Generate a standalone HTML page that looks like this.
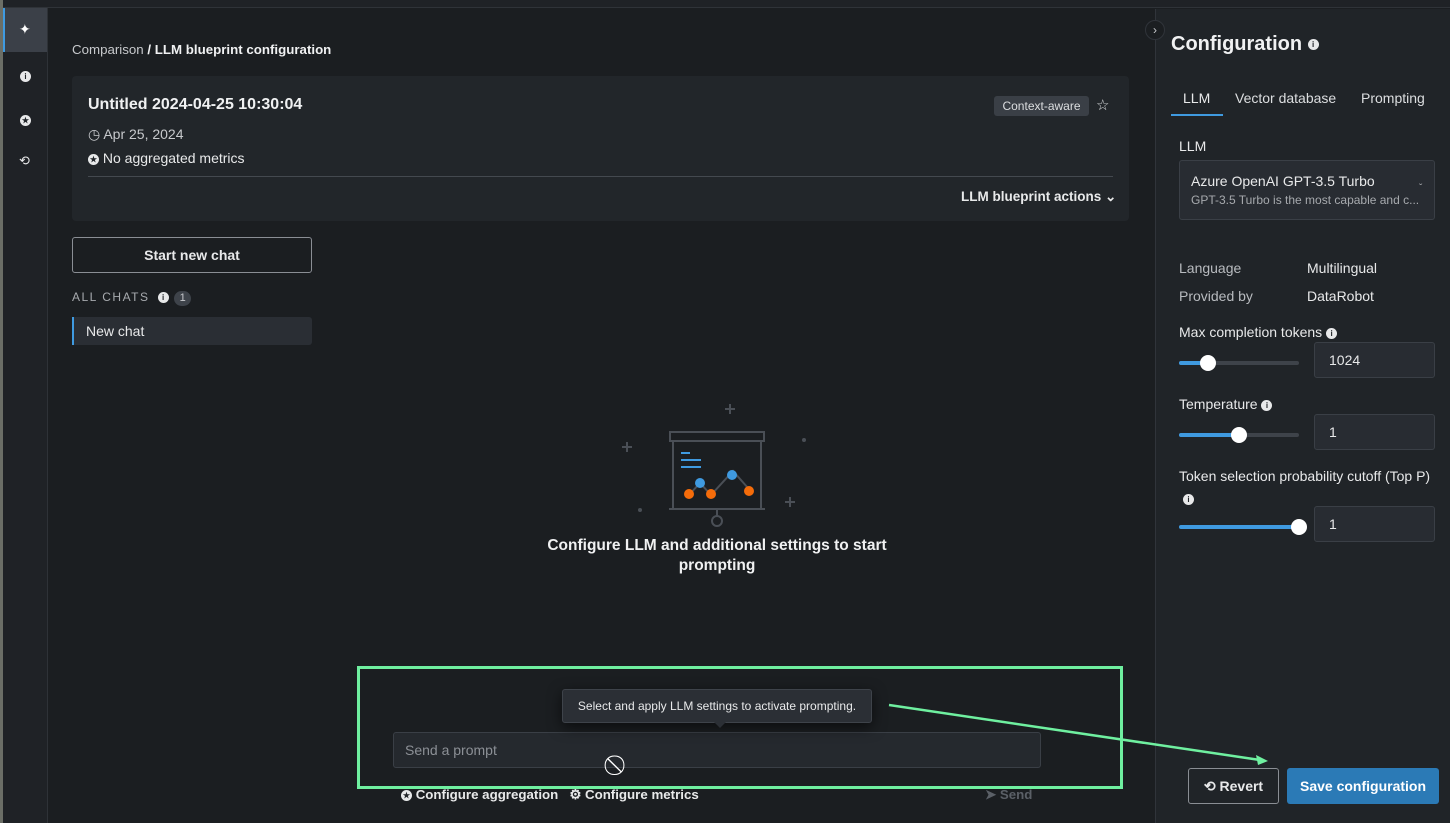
<!DOCTYPE html>
<html><head><meta charset="utf-8"><style>
*{box-sizing:border-box;margin:0;padding:0}
body{width:1450px;height:823px;overflow:hidden;background:#1b1e21;font-family:"Liberation Sans",sans-serif;color:#e8e9ea;position:relative}
.a{position:absolute}
.ic{display:inline-block;width:11px;height:11px;border-radius:50%;background:#e8e9ea;color:#202428;font-size:8px;font-weight:bold;text-align:center;line-height:11px;vertical-align:middle}
.inp{position:absolute;background:#282c32;border:1px solid #3a3f46;border-radius:3px;font-size:14px;padding-left:14px}
.track{position:absolute;height:4px;background:#3e434a;border-radius:2px}
.fill{position:absolute;height:4px;background:#3f9ae0;border-radius:2px}
.knob{position:absolute;width:16px;height:16px;background:#fff;border-radius:50%}
</style></head><body>
<div class="a" style="left:0;top:0;width:3px;height:823px;background:#6b6e66"></div>
<div class="a" style="left:3px;top:0;width:1447px;height:8px;background:#1f2226;border-bottom:1px solid #2f3338"></div>
<div class="a" style="left:3px;top:8px;width:45px;height:815px;background:#1f2226;border-right:1px solid #2e3237"></div>
<div class="a" style="left:3px;top:8px;width:44px;height:44px;background:#3b4048;border-left:2px solid #3f9ae0"></div>
<div class="a" style="left:19px;top:21px;font-size:14px;color:#fff">✦</div>
<div class="a" style="left:20px;top:68px"><span class="ic">i</span></div>
<div class="a" style="left:20px;top:112px"><span class="ic">★</span></div>
<div class="a" style="left:19px;top:153px;font-size:13px;color:#e8e9ea">⟲</div>

<div class="a" style="left:72px;top:42px;font-size:13.3px;color:#c7c9cc">Comparison <b style="color:#f0f1f2">/ LLM blueprint configuration</b></div>

<div class="a" style="left:72px;top:76px;width:1057px;height:145px;background:#22262a;border-radius:4px"></div>
<div class="a" style="left:88px;top:96px;font-size:16px;font-weight:bold;color:#f0f1f2">Untitled 2024-04-25 10:30:04</div>
<div class="a" style="left:88px;top:126px;font-size:14px;color:#c7c9cc">◷ Apr 25, 2024</div>
<div class="a" style="left:88px;top:150px;font-size:14px;color:#e8e9ea"><span class="ic">★</span> No aggregated metrics</div>
<div class="a" style="left:88px;top:176px;width:1025px;height:1px;background:#44494f"></div>
<div class="a" style="left:994px;top:96px;width:95px;height:20px;background:#3a3f46;border-radius:3px;font-size:12px;color:#dcdee0;text-align:center;line-height:20px">Context-aware</div>
<div class="a" style="left:1096px;top:96px;font-size:15px;color:#dcdee0">☆</div>
<div class="a" style="left:961px;top:189px;font-size:13.5px;font-weight:bold;color:#e8e9ea">LLM blueprint actions ⌄</div>

<div class="a" style="left:72px;top:237px;width:240px;height:36px;border:1px solid #8a8e94;border-radius:3px;font-size:14px;font-weight:bold;text-align:center;line-height:34px">Start new chat</div>
<div class="a" style="left:72px;top:290px;font-size:12px;letter-spacing:1.5px;color:#a7aaae">ALL CHATS <span class="ic" style="margin-left:4px">i</span> <span style="display:inline-block;width:17px;height:15px;border-radius:8px;background:#3e434a;color:#c7c9cc;text-align:center;line-height:15px;letter-spacing:0;font-size:11px">1</span></div>
<div class="a" style="left:72px;top:317px;width:240px;height:28px;background:#2a2e34;border-left:2px solid #3f9ae0;border-radius:0 3px 3px 0;font-size:14px;padding-left:12px;line-height:28px">New chat</div>

<svg class="a" style="left:600px;top:390px" width="230" height="150">
<g stroke="#4a4f56" stroke-width="2" fill="none">
<path d="M130 14v10M125 19h10M27 52v10M22 57h10M190 107v10M185 112h10"/>
<rect x="70" y="42" width="94" height="9"/><path d="M73 51v68M161 51v68M69 119h96M117 119v7"/><circle cx="117" cy="131" r="5"/>
<path d="M89 105l11-12 11 12 22-24 15 17"/></g>
<circle cx="204" cy="50" r="2" fill="#4a4f56"/><circle cx="40" cy="120" r="2" fill="#4a4f56"/>
<path d="M81 63h9M81 70h20M81 77h20" stroke="#3f9ae0" stroke-width="2"/>
<circle cx="89" cy="104" r="5" fill="#f56c0a"/><circle cx="111" cy="104" r="5" fill="#f56c0a"/><circle cx="149" cy="101" r="5" fill="#f56c0a"/>
<circle cx="100" cy="93" r="5" fill="#3f9ae0"/><circle cx="132" cy="85" r="5" fill="#3f9ae0"/>
</svg>
<div class="a" style="left:540px;top:536px;width:354px;text-align:center;font-size:15.5px;font-weight:bold;line-height:20px;color:#f0f1f2">Configure LLM and additional settings to start prompting</div>

<div class="inp" style="left:393px;top:732px;width:648px;height:36px;line-height:34px;color:#8c9096;background:#25292e;padding-left:11px">Send a prompt</div>
<div class="a" style="left:562px;top:689px;width:310px;height:34px;background:#2b2f35;border:1px solid #3e434a;border-radius:3px;font-size:12px;line-height:32px;text-align:center;color:#e8e9ea;box-shadow:0 4px 14px rgba(0,0,0,.6)">Select and apply LLM settings to activate prompting.</div>
<div class="a" style="left:714px;top:722px;width:0;height:0;border-left:6px solid transparent;border-right:6px solid transparent;border-top:6px solid #2b2f35"></div>
<div class="a" style="left:401px;top:787px;font-size:13.3px;font-weight:bold;color:#e8e9ea"><span class="ic">★</span> Configure aggregation &nbsp; ⚙ Configure metrics</div>
<div class="a" style="left:985px;top:787px;font-size:13.3px;font-weight:bold;color:#5b6067">➤ Send</div>
<div class="a" style="left:619px;top:754px;font-size:20px;color:#fff">⃠</div>

<div class="a" style="left:1155px;top:9px;width:295px;height:814px;background:#202428;border-left:1px solid #30343a"></div>
<div class="a" style="left:1145px;top:20px;width:20px;height:20px;border-radius:50%;background:#1b1e21;border:1px solid #30343a;color:#c7c9cc;font-size:12px;text-align:center;line-height:18px">›</div>
<div class="a" style="left:1171px;top:33px;font-size:20px;font-weight:bold;color:#f0f1f2">Configuration <span class="ic">i</span></div>
<div class="a" style="left:1183px;top:90px;font-size:14px">LLM</div>
<div class="a" style="left:1235px;top:90px;font-size:14px;color:#dcdee0">Vector database</div>
<div class="a" style="left:1361px;top:90px;font-size:14px;color:#dcdee0">Prompting</div>
<div class="a" style="left:1171px;top:114px;width:52px;height:2px;background:#3f9ae0"></div>
<div class="a" style="left:1179px;top:138px;font-size:14px">LLM</div>
<div class="a" style="left:1179px;top:160px;width:256px;height:60px;background:#282c32;border:1px solid #3a3f46;border-radius:3px"></div>
<div class="a" style="left:1191px;top:173px;font-size:14px">Azure OpenAI GPT-3.5 Turbo</div>
<div class="a" style="left:1191px;top:193px;font-size:12px;color:#a7aaae">GPT-3.5 Turbo is the most capable and c...</div>
<div class="a" style="left:1419px;top:183px;font-size:10px;color:#a7aaae">ˇ</div>
<div class="a" style="left:1179px;top:260px;font-size:14px;color:#b8bbbf">Language</div>
<div class="a" style="left:1307px;top:260px;font-size:14px">Multilingual</div>
<div class="a" style="left:1179px;top:288px;font-size:14px;color:#b8bbbf">Provided by</div>
<div class="a" style="left:1307px;top:288px;font-size:14px">DataRobot</div>

<div class="a" style="left:1179px;top:324px;font-size:14px">Max completion tokens <span class="ic">i</span></div>
<div class="track" style="left:1179px;top:361px;width:120px"></div><div class="fill" style="left:1179px;top:361px;width:30px"></div><div class="knob" style="left:1200px;top:355px"></div>
<div class="inp" style="left:1314px;top:342px;width:121px;height:36px;line-height:34px">1024</div>

<div class="a" style="left:1179px;top:396px;font-size:14px">Temperature <span class="ic">i</span></div>
<div class="track" style="left:1179px;top:433px;width:120px"></div><div class="fill" style="left:1179px;top:433px;width:60px"></div><div class="knob" style="left:1231px;top:427px"></div>
<div class="inp" style="left:1314px;top:414px;width:121px;height:36px;line-height:34px">1</div>

<div class="a" style="left:1179px;top:468px;font-size:14px">Token selection probability cutoff (Top P)</div>
<div class="a" style="left:1183px;top:491px"><span class="ic">i</span></div>
<div class="track" style="left:1179px;top:525px;width:120px;background:#3f9ae0"></div><div class="knob" style="left:1291px;top:519px"></div>
<div class="inp" style="left:1314px;top:506px;width:121px;height:36px;line-height:34px">1</div>

<div class="a" style="left:1188px;top:768px;width:91px;height:36px;border:1px solid #8a8e94;border-radius:3px;font-size:14px;font-weight:bold;text-align:center;line-height:34px">⟲ Revert</div>
<div class="a" style="left:1287px;top:768px;width:152px;height:36px;background:#2b7ab6;border-radius:3px;font-size:14px;font-weight:bold;text-align:center;line-height:36px;color:#fff">Save configuration</div>

<div class="a" style="left:357px;top:666px;width:766px;height:123px;border:3px solid #6ff0a0"></div>
<svg class="a" style="left:0;top:0" width="1450" height="823"><line x1="889" y1="705" x2="1260" y2="760" stroke="#6ff0a0" stroke-width="2.5"/><path d="M1268 761l-12-6 2 10z" fill="#6ff0a0"/></svg>
</body></html>
